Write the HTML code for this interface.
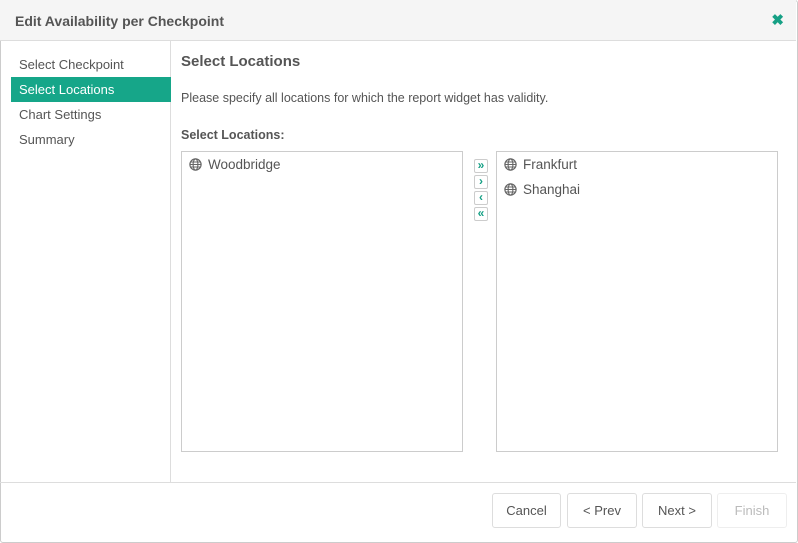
<!DOCTYPE html>
<html><head><style>
*{box-sizing:border-box;margin:0;padding:0}
body{width:798px;height:543px;background:#fff;font-family:"Liberation Sans",sans-serif;color:#555;font-size:13px;position:relative;overflow:hidden}
.dlg{position:absolute;left:0;top:0;width:798px;height:543px;border:1px solid #ccc;border-radius:3px}
.hdr{position:absolute;left:0;top:0;width:796px;height:41px;background:#f5f5f5;border-bottom:1px solid #ddd}
.hdr h1{position:absolute;left:15px;top:13px;font-size:14px;font-weight:bold;color:#555}
.x{position:absolute;right:12px;top:11px;color:#16a085;font-size:15px;font-weight:bold}
.side{position:absolute;left:0;top:41px;width:171px;height:441px;border-right:1px solid #ddd}
.it{position:absolute;left:11px;width:160px;height:25px;line-height:25px;padding-left:8px;font-size:13px;color:#555}
.it.a{background:#16a689;color:#fff}
.t{position:absolute;left:181px}
.box{position:absolute;top:151px;width:282px;height:301px;border:1px solid #ccc}
.row{position:absolute;left:7px;font-size:13.5px;color:#555}
.g{display:inline-block;vertical-align:-2px;margin-right:6px}
.ab{position:absolute;left:474px;width:14px;height:14px;border:1px solid #ccc;border-radius:2px;color:#16a085;font-size:12px;line-height:11px;text-align:center;font-weight:bold}
.ft{position:absolute;left:0;top:482px;width:796px;border-top:1px solid #ddd}
.b{position:absolute;top:493px;height:35px;border:1px solid #ddd;border-radius:3px;line-height:33px;text-align:center;font-size:13px;color:#555;background:#fff}
</style></head><body>
<div class="dlg"></div>
<div class="hdr"><h1>Edit Availability per Checkpoint</h1><div class="x">✖</div></div>
<div class="side">
<div class="it" style="top:11px">Select Checkpoint</div>
<div class="it a" style="top:36px">Select Locations</div>
<div class="it" style="top:61px">Chart Settings</div>
<div class="it" style="top:86px">Summary</div>
</div>
<div class="t" style="top:53px;font-size:15px;font-weight:bold">Select Locations</div>
<div class="t" style="top:91px;font-size:12.5px">Please specify all locations for which the report widget has validity.</div>
<div class="t" style="top:128px;font-size:12.5px;font-weight:bold">Select Locations:</div>
<svg width="0" height="0" style="position:absolute"><defs><g id="gl"><circle cx="6.5" cy="6.5" r="5.6" fill="none" stroke="#666" stroke-width="1.2"/><ellipse cx="6.5" cy="6.5" rx="2.4" ry="5.6" fill="none" stroke="#666" stroke-width="1.1"/><path d="M1 6.5H12M2 4H11M2 9H11" stroke="#666" stroke-width="1"/></g></defs></svg>
<div class="box" style="left:181px">
<div class="row" style="top:5px"><svg class="g" width="13" height="13"><use href="#gl"/></svg>Woodbridge</div>
</div>
<div class="ab" style="top:159px">»</div>
<div class="ab" style="top:175px">›</div>
<div class="ab" style="top:191px">‹</div>
<div class="ab" style="top:207px">«</div>
<div class="box" style="left:496px">
<div class="row" style="top:5px"><svg class="g" width="13" height="13"><use href="#gl"/></svg>Frankfurt</div>
<div class="row" style="top:30px"><svg class="g" width="13" height="13"><use href="#gl"/></svg>Shanghai</div>
</div>
<div class="ft"></div>
<div class="b" style="left:492px;width:69px">Cancel</div>
<div class="b" style="left:567px;width:70px">&lt; Prev</div>
<div class="b" style="left:642px;width:70px">Next &gt;</div>
<div class="b" style="left:717px;width:70px;color:#bbb;border-color:#eee">Finish</div>
</body></html>
